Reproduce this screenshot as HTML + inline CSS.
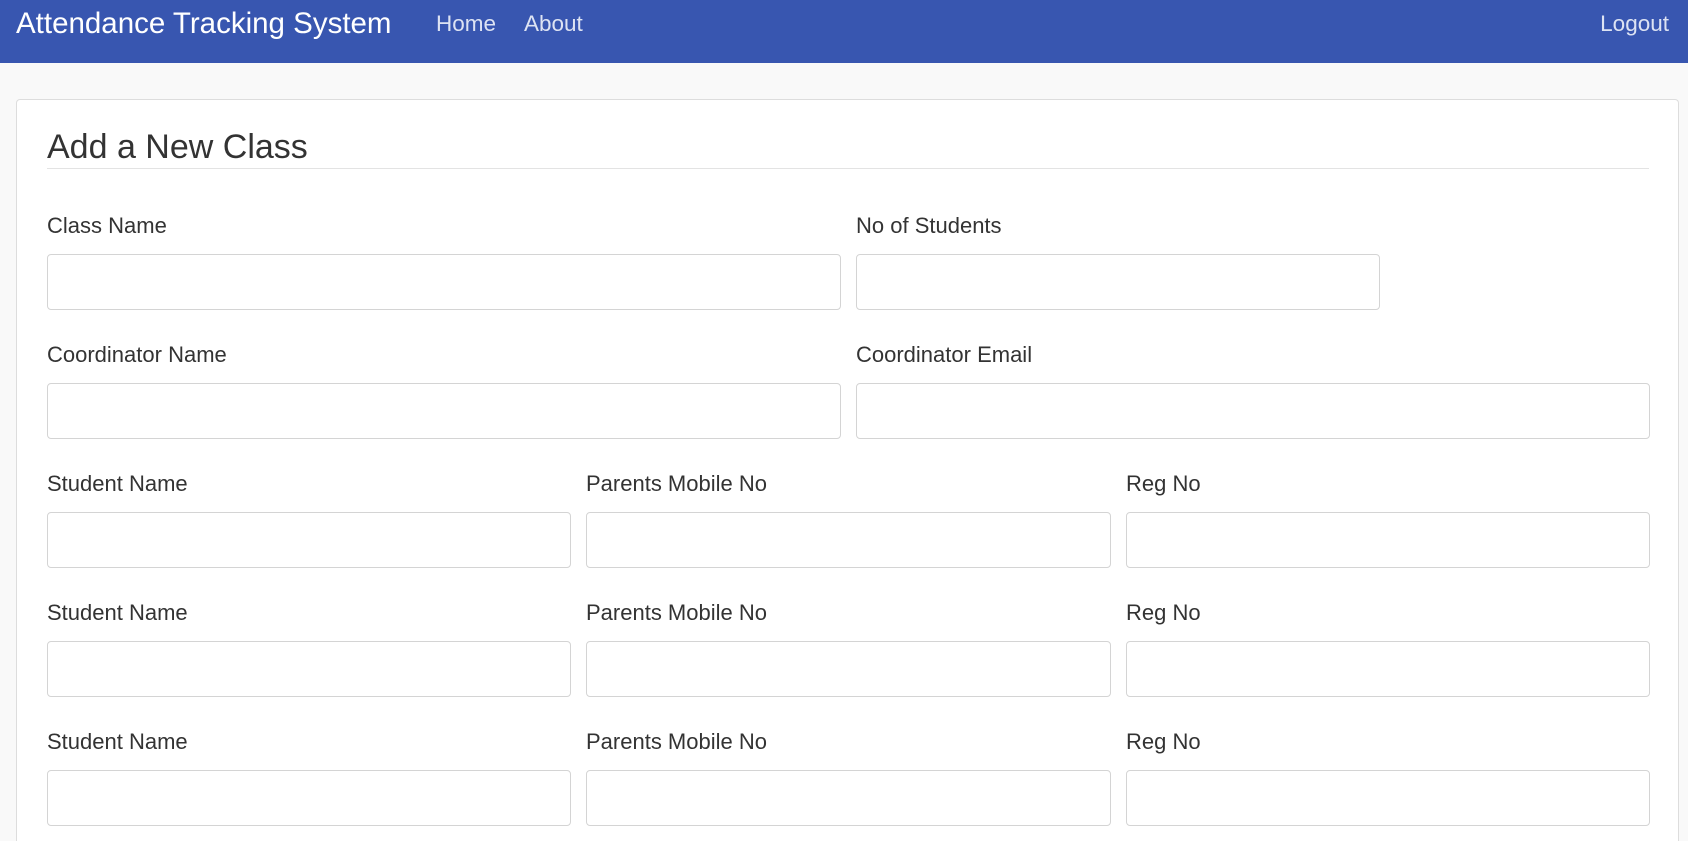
<!DOCTYPE html>
<html style="width:1688px;height:841px;overflow:hidden"><head><meta charset="utf-8"><style>
*{box-sizing:border-box;margin:0;padding:0}
html,body{width:1688px;height:841px;overflow:hidden}
body{background:#f9f9f9;font-family:"Liberation Sans",sans-serif;position:relative}
.nav{position:absolute;left:0;top:0;width:1688px;height:63px;background:#3856b0}
.nav span{position:absolute;color:#fff;top:0;line-height:48px}
.card{position:absolute;left:16px;top:99px;width:1663px;height:742px;background:#fff;border:1px solid #ddd;border-bottom:none;border-radius:4px 4px 0 0}
h1{position:absolute;left:47px;top:126px;font-weight:normal;font-size:34px;color:#333;line-height:42px}
.hr{position:absolute;left:47px;top:168px;width:1602px;height:1px;background:#e3e3e3}
.l{position:absolute;font-size:22px;color:#333;line-height:24px}
.i{position:absolute;height:56px;border:1px solid #d4d4d4;border-radius:4px;background:#fff}
</style></head><body>
<div class="nav">
<span style="left:16px;font-size:29.5px">Attendance Tracking System</span>
<span style="left:436px;font-size:22.5px;color:#dde3f3">Home</span>
<span style="left:524px;font-size:22.5px;color:#dde3f3">About</span>
<span style="right:19px;font-size:22.5px;color:#dde3f3">Logout</span>
</div>
<div class="card"></div>
<h1>Add a New Class</h1>
<div class="hr"></div>

<div class="l" style="left:47px;top:214px">Class Name</div>
<div class="l" style="left:856px;top:214px">No of Students</div>
<div class="i" style="left:47px;top:254px;width:794px"></div>
<div class="i" style="left:856px;top:254px;width:524px"></div>

<div class="l" style="left:47px;top:343px">Coordinator Name</div>
<div class="l" style="left:856px;top:343px">Coordinator Email</div>
<div class="i" style="left:47px;top:383px;width:794px"></div>
<div class="i" style="left:856px;top:383px;width:794px"></div>

<div class="l" style="left:47px;top:472px">Student Name</div>
<div class="l" style="left:586px;top:472px">Parents Mobile No</div>
<div class="l" style="left:1126px;top:472px">Reg No</div>
<div class="i" style="left:47px;top:512px;width:524px"></div>
<div class="i" style="left:586px;top:512px;width:525px"></div>
<div class="i" style="left:1126px;top:512px;width:524px"></div>

<div class="l" style="left:47px;top:601px">Student Name</div>
<div class="l" style="left:586px;top:601px">Parents Mobile No</div>
<div class="l" style="left:1126px;top:601px">Reg No</div>
<div class="i" style="left:47px;top:641px;width:524px"></div>
<div class="i" style="left:586px;top:641px;width:525px"></div>
<div class="i" style="left:1126px;top:641px;width:524px"></div>

<div class="l" style="left:47px;top:730px">Student Name</div>
<div class="l" style="left:586px;top:730px">Parents Mobile No</div>
<div class="l" style="left:1126px;top:730px">Reg No</div>
<div class="i" style="left:47px;top:770px;width:524px"></div>
<div class="i" style="left:586px;top:770px;width:525px"></div>
<div class="i" style="left:1126px;top:770px;width:524px"></div>
</body></html>
